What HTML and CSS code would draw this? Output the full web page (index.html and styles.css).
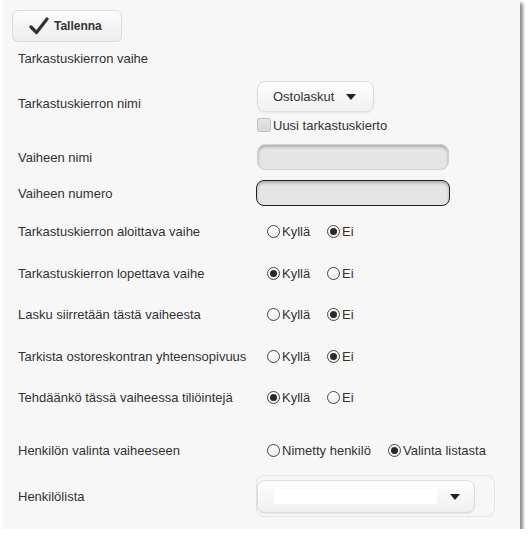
FILE: index.html
```html
<!DOCTYPE html>
<html lang="fi">
<head>
  <meta charset="UTF-8">
  <meta name="viewport" content="width=device-width, initial-scale=1">
  <title>Tarkastuskierron vaihe</title>
  <link rel="stylesheet" href="styles.css">
</head>
<body>
  <div class="panel">
    <button class="save-btn" type="button">
      <svg class="check-icon" width="20" height="18" viewBox="0 0 20 18">
        <path d="M2 10 L7.5 15.5 L18 2" fill="none" stroke="#333" stroke-width="3.2" stroke-linecap="round" stroke-linejoin="round"/>
      </svg>
      Tallenna
    </button>

    <div class="section-title">Tarkastuskierron vaihe</div>

    <div class="row row-name">
      <div class="lbl lbl-name">Tarkastuskierron nimi</div>
      <div class="ctrl">
        <div class="select-btn">Ostolaskut <span class="caret"></span></div>
        <label class="check"><span class="box"></span>Uusi tarkastuskierto</label>
      </div>
    </div>

    <div class="row row-input">
      <div class="lbl">Vaiheen nimi</div>
      <div class="ctrl"><input class="text-input" type="text"></div>
    </div>

    <div class="row row-input row-num">
      <div class="lbl">Vaiheen numero</div>
      <div class="ctrl"><input class="text-input focused" type="text"></div>
    </div>

    <div class="radio-rows">
      <div class="row row-radio">
        <div class="lbl">Tarkastuskierron aloittava vaihe</div>
        <div class="ctrl options">
          <span class="opt"><span class="radio"></span>Kyllä</span>
          <span class="opt"><span class="radio on"></span>Ei</span>
        </div>
      </div>
      <div class="row row-radio">
        <div class="lbl">Tarkastuskierron lopettava vaihe</div>
        <div class="ctrl options">
          <span class="opt"><span class="radio on"></span>Kyllä</span>
          <span class="opt"><span class="radio"></span>Ei</span>
        </div>
      </div>
      <div class="row row-radio">
        <div class="lbl">Lasku siirretään tästä vaiheesta</div>
        <div class="ctrl options">
          <span class="opt"><span class="radio"></span>Kyllä</span>
          <span class="opt"><span class="radio on"></span>Ei</span>
        </div>
      </div>
      <div class="row row-radio">
        <div class="lbl">Tarkista ostoreskontran yhteensopivuus</div>
        <div class="ctrl options">
          <span class="opt"><span class="radio"></span>Kyllä</span>
          <span class="opt"><span class="radio on"></span>Ei</span>
        </div>
      </div>
      <div class="row row-radio">
        <div class="lbl">Tehdäänkö tässä vaiheessa tiliöintejä</div>
        <div class="ctrl options">
          <span class="opt"><span class="radio on"></span>Kyllä</span>
          <span class="opt"><span class="radio"></span>Ei</span>
        </div>
      </div>
    </div>

    <div class="row row-radio row-person">
      <div class="lbl">Henkilön valinta vaiheeseen</div>
      <div class="ctrl options">
        <span class="opt opt-wide"><span class="radio"></span>Nimetty henkilö</span>
        <span class="opt"><span class="radio on"></span>Valinta listasta</span>
      </div>
    </div>

    <div class="row row-list">
      <div class="lbl">Henkilölista</div>
      <div class="ctrl">
        <div class="list-wrap">
          <div class="list-select">
            <span class="list-value"></span>
            <span class="caret"></span>
          </div>
        </div>
      </div>
    </div>
  </div>
</body>
</html>
```

FILE: styles.css
```css
* {
  box-sizing: border-box;
}
body {
  margin: 0;
  background: #fff;
  font-family: "Liberation Sans", Arial, sans-serif;
  font-size: 13px;
  color: #333;
}
.panel {
  margin-left: 3px;
  width: 517px;
  height: 529px;
  padding: 10px 0 0 15px;
  background: #f7f7f7;
  box-shadow: 3px 3px 3px rgba(0,0,0,0.45);
}
.save-btn {
  display: flex;
  align-items: center;
  gap: 5px;
  width: 110px;
  height: 32px;
  margin-left: -6px;
  padding: 0 0 0 16px;
  border: 1px solid #dcdcdc;
  border-radius: 6px;
  background: linear-gradient(#fdfdfd, #ededed);
  font-family: inherit;
  font-size: 12px;
  font-weight: bold;
  color: #333;
}
.section-title {
  height: 22px;
  margin-top: 6px;
  line-height: 22px;
}
.row {
  display: flex;
  align-items: center;
}
.lbl {
  width: 239px;
  flex-shrink: 0;
}
.row-name {
  margin-top: 11px;
}
.lbl-name {
  padding-bottom: 7px;
}
.select-btn {
  display: flex;
  align-items: center;
  width: 117px;
  height: 31px;
  padding-left: 15px;
  border: 1px solid #dedede;
  border-radius: 8px;
  background: linear-gradient(#fefefe, #f1f1f1);
  box-shadow: 0 1px 2px rgba(0,0,0,0.08);
}
.select-btn .caret {
  margin-left: 12px;
}
.caret {
  width: 0;
  height: 0;
  border-left: 5px solid transparent;
  border-right: 5px solid transparent;
  border-top: 6px solid #222;
}
.check {
  display: flex;
  align-items: center;
  height: 14px;
  margin-top: 6px;
}
.box {
  width: 14px;
  height: 14px;
  margin-right: 2px;
  border: 1px solid #c4c4c4;
  border-radius: 2px;
  background: linear-gradient(#e4e4e4, #d9d9d9);
}
.row-input {
  margin-top: 12px;
  height: 26px;
}
.row-num {
  margin-top: 10px;
}
.text-input {
  display: block;
  width: 192px;
  height: 26px;
  border: 1px solid #d2d2d2;
  border-radius: 8px;
  background: #e5e5e5;
  box-shadow: inset 0 2px 3px rgba(0,0,0,0.25);
}
.text-input.focused {
  width: 194px;
  margin-left: -1px;
  border-color: #222;
}
.radio-rows {
  margin-top: 5px;
}
.row-radio {
  height: 41.5px;
}
.options {
  display: flex;
  padding-left: 10px;
}
.opt {
  display: inline-flex;
  align-items: center;
  width: 60px;
  white-space: nowrap;
}
.opt:last-child {
  width: auto;
}
.opt-wide {
  width: 121px;
}
.radio {
  position: relative;
  flex-shrink: 0;
  width: 13px;
  height: 13px;
  margin-right: 2px;
  border: 1px solid #444;
  border-radius: 50%;
  background: linear-gradient(#fff, #ececec);
}
.radio.on::after {
  content: "";
  position: absolute;
  left: 2px;
  top: 2px;
  width: 7px;
  height: 7px;
  border-radius: 50%;
  background: #2a2a2a;
}
.row-person {
  margin-top: 10.75px;
}
.row-list {
  margin-top: 4.25px;
  height: 42px;
}
.list-wrap {
  width: 239px;
  height: 42px;
  margin-left: -1px;
  padding: 4px 19px 3px 0;
  border: 1px solid #e6e6e6;
  border-radius: 8px;
}
.list-select {
  display: flex;
  align-items: center;
  height: 33px;
  padding-left: 16px;
  border: 1px solid #dcdcdc;
  border-radius: 8px;
  background: linear-gradient(#fefefe, #f0f0f0);
  box-shadow: 0 1px 2px rgba(0,0,0,0.08);
}
.list-value {
  width: 163px;
  height: 15px;
  background: #fff;
}
.list-select .caret {
  margin-left: 13px;
}
```
